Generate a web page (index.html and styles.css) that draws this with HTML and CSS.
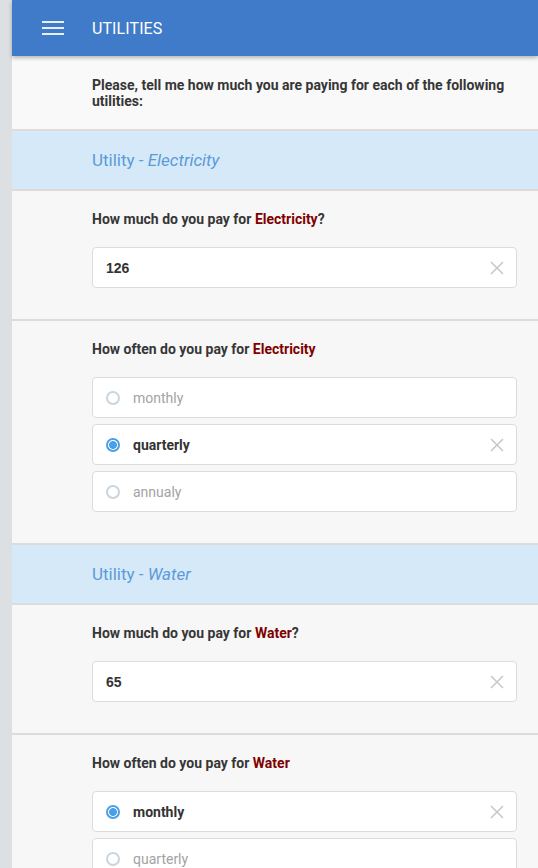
FILE: index.html
```html
<!DOCTYPE html>
<html lang="en">
<head>
<meta charset="utf-8">
<title>Utilities</title>
<link rel="stylesheet" href="styles.css">
</head>
<body>
<div class="app">
  <header class="topbar">
    <span class="menu-icon" aria-label="Menu"><i></i><i></i><i></i></span>
    <h1 class="topbar-title">UTILITIES</h1>
  </header>

  <section class="intro">Please, tell me how much you are paying for each of the following utilities:</section>

  <section class="group-head">Utility - <em>Electricity</em></section>

  <section class="question">
    <div class="q-label">How much do you pay for <span class="hl">Electricity</span>?</div>
    <div class="field">
      <span class="field-value">126</span>
      <svg class="clear" width="14" height="14" viewBox="0 0 14 14"><path d="M1 1L13 13M13 1L1 13"/></svg>
    </div>
  </section>

  <section class="question">
    <div class="q-label">How often do you pay for <span class="hl">Electricity</span></div>
    <div class="options">
      <div class="option"><span class="radio"></span><span class="opt-text">monthly</span></div>
      <div class="option selected"><span class="radio"></span><span class="opt-text">quarterly</span>
        <svg class="clear" width="14" height="14" viewBox="0 0 14 14"><path d="M1 1L13 13M13 1L1 13"/></svg></div>
      <div class="option"><span class="radio"></span><span class="opt-text">annualy</span></div>
    </div>
  </section>

  <section class="group-head">Utility - <em>Water</em></section>

  <section class="question">
    <div class="q-label">How much do you pay for <span class="hl">Water</span>?</div>
    <div class="field">
      <span class="field-value">65</span>
      <svg class="clear" width="14" height="14" viewBox="0 0 14 14"><path d="M1 1L13 13M13 1L1 13"/></svg>
    </div>
  </section>

  <section class="question">
    <div class="q-label">How often do you pay for <span class="hl">Water</span></div>
    <div class="options">
      <div class="option selected"><span class="radio"></span><span class="opt-text">monthly</span>
        <svg class="clear" width="14" height="14" viewBox="0 0 14 14"><path d="M1 1L13 13M13 1L1 13"/></svg></div>
      <div class="option"><span class="radio"></span><span class="opt-text">quarterly</span></div>
      <div class="option"><span class="radio"></span><span class="opt-text">annualy</span></div>
    </div>
  </section>
</div>
</body>
</html>
```
FILE: styles.css
```css
html, body {
  margin: 0;
  padding: 0;
}
body {
  background: #dde0e3;
  font-family: Roboto, "Liberation Sans", Arial, sans-serif;
  color: #333;
}
.app {
  margin-left: 12px;
  background: #f7f7f7;
  min-height: 868px;
}
.topbar {
  position: relative;
  z-index: 2;
  height: 56px;
  background: #3f7bc8;
  box-shadow: 0 2px 4px rgba(0, 0, 0, 0.28);
  display: flex;
  align-items: center;
  padding-left: 30px;
}
.menu-icon {
  display: flex;
  flex-direction: column;
  gap: 4px;
  width: 22px;
  margin-right: 28px;
}
.menu-icon i {
  display: block;
  height: 2px;
  background: #e9eff8;
}
.topbar-title {
  margin: 0;
  font-size: 16px;
  font-weight: 400;
  color: #fff;
  letter-spacing: 0.1px;
}
.intro {
  background: #f9f9f9;
  padding: 21px 21px 20px 80px;
  font-size: 14px;
  font-weight: 700;
  line-height: 16px;
  color: #363636;
}
.group-head {
  border-top: 2px solid #dcdcdc;
  height: 58px;
  line-height: 58px;
  background: #d6e9f8;
  padding-left: 80px;
  font-size: 17px;
  color: #5b9bd9;
}
.group-head em {
  font-style: italic;
}
.question {
  border-top: 2px solid #dcdcdc;
  background: #f7f7f7;
  padding: 20px 21px 31px 80px;
}
.q-label {
  font-size: 14px;
  font-weight: 700;
  line-height: 17px;
  color: #363636;
  margin-bottom: 19px;
}
.hl {
  color: #800000;
}
.field,
.option {
  box-sizing: border-box;
  height: 41px;
  background: #fff;
  border: 1px solid #dcdcdc;
  border-radius: 4px;
  display: flex;
  align-items: center;
  padding: 0 12px 0 13px;
}
.field-value {
  font-family: "Liberation Sans", Arial, sans-serif;
  font-size: 14px;
  font-weight: 700;
  color: #333;
}
.clear {
  margin-left: auto;
  fill: none;
  stroke: #c8c8c8;
  stroke-width: 1.6;
}
.options {
  display: flex;
  flex-direction: column;
  gap: 6px;
}
.radio {
  box-sizing: border-box;
  width: 14px;
  height: 14px;
  border-radius: 50%;
  border: 2px solid #c9d6df;
  background: #fff;
  margin-right: 13px;
  flex: none;
}
.opt-text {
  font-size: 14px;
  color: #a3a3a3;
}
.option.selected .radio {
  border-color: #4aa0e6;
  background: radial-gradient(circle, #4aa0e6 0 3.6px, #fff 4.2px);
}
.option.selected .opt-text {
  font-weight: 700;
  color: #333;
}
```
